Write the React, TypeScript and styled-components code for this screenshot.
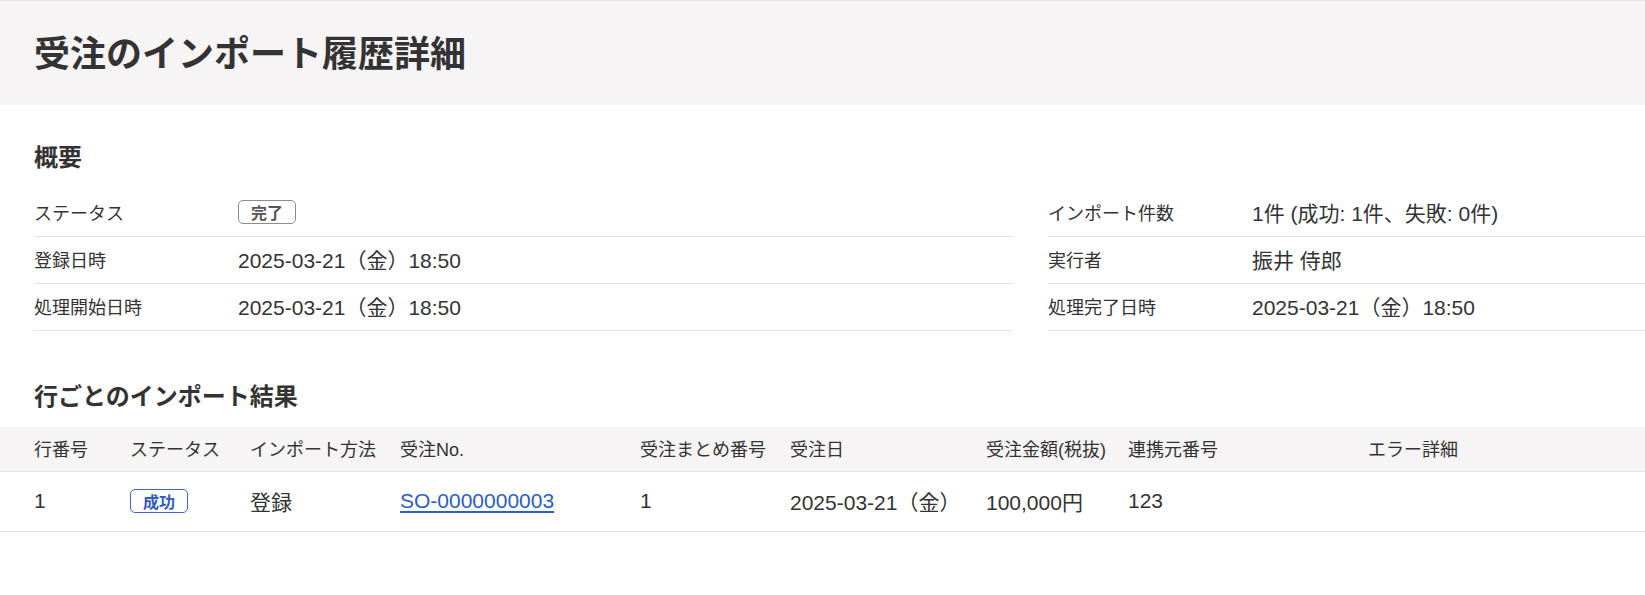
import {FC} from 'react'
import styled, {createGlobalStyle} from 'styled-components'

const GlobalStyle = createGlobalStyle`
  html, body {
    margin: 0;
    padding: 0;
    overflow: hidden;
    background: #fff;
  }
  body {
    font-family: "Liberation Sans", "Noto Sans CJK JP", sans-serif;
    color: #333;
  }
`

const Page = styled.div`
  min-width: 2060px;
  border-top: 1px solid #e6e6e6;
`

const TitleBar = styled.header`
  height: 104px;
  background: #f6f4f5;
  display: flex;
  align-items: center;
  padding: 0 0 4px 34px;
  box-sizing: border-box;
`

const Title = styled.h1`
  margin: 0;
  font-size: 36px;
  font-weight: 700;
  color: #333;
`

const Section = styled.section<{$top: number}>`
  padding-top: ${p => p.$top}px;
`

const Heading = styled.h2<{$gap: number}>`
  margin: 0 0 ${p => p.$gap}px;
  padding-left: 34px;
  font-size: 24px;
  line-height: 36px;
  font-weight: 700;
`

const Overview = styled.div`
  display: grid;
  grid-template-columns: 978px 978px;
  column-gap: 36px;
  padding-left: 34px;
`

const Column = styled.dl`
  margin: 0;
`

const Row = styled.div`
  display: flex;
  align-items: center;
  height: 46px;
  padding-bottom: 3px;
  box-sizing: content-box;
  height: 43px;
  border-bottom: 1px solid #e4e4e4;
`

const Label = styled.dt`
  width: 204px;
  flex-shrink: 0;
  font-size: 18px;
`

const Value = styled.dd`
  margin: 0;
  font-size: 21px;
`

const Badge = styled.span<{$tone: 'grey' | 'blue'}>`
  display: inline-flex;
  align-items: center;
  justify-content: center;
  box-sizing: border-box;
  width: 58px;
  height: 24px;
  border-radius: 5px;
  font-size: 16px;
  font-weight: 700;
  background: #fff;
  border: 1px solid ${p => (p.$tone === 'blue' ? '#3d68c8' : '#8c8c8c')};
  color: ${p => (p.$tone === 'blue' ? '#2f5bc2' : '#555')};
`

const cols = '96px 120px 150px 240px 150px 196px 142px 240px 1fr'

const TableHead = styled.div`
  display: grid;
  grid-template-columns: ${cols};
  align-items: center;
  height: 42px;
  padding: 0 0 2px 34px;
  background: #f6f4f5;
  border-bottom: 1px solid #e2e2e2;
  font-size: 18px;
`

const TableRow = styled.div`
  display: grid;
  grid-template-columns: ${cols};
  align-items: center;
  height: 57px;
  padding: 0 0 2px 34px;
  border-bottom: 1px solid #e4e4e4;
  font-size: 21px;
`

const Cell = styled.div`
  white-space: nowrap;
`

const Link = styled.a`
  color: #2c5cc5;
  text-decoration: underline;
  text-decoration-thickness: 2px;
  text-underline-offset: 3px;
`

const summaryLeft = [
  {label: 'ステータス', value: <Badge $tone="grey">完了</Badge>},
  {label: '登録日時', value: '2025-03-21（金）18:50'},
  {label: '処理開始日時', value: '2025-03-21（金）18:50'},
]

const summaryRight = [
  {label: 'インポート件数', value: '1件 (成功: 1件、失敗: 0件)'},
  {label: '実行者', value: '振井 侍郎'},
  {label: '処理完了日時', value: '2025-03-21（金）18:50'},
]

const headers = ['行番号', 'ステータス', 'インポート方法', '受注No.', '受注まとめ番号', '受注日', '受注金額(税抜)', '連携元番号', 'エラー詳細']

const App: FC = () => {
  return (
    <Page>
      <GlobalStyle/>
      <TitleBar>
        <Title>受注のインポート履歴詳細</Title>
      </TitleBar>

      <Section $top={35}>
        <Heading $gap={14}>概要</Heading>
        <Overview>
          <Column>
            {summaryLeft.map(r => (
              <Row key={r.label}>
                <Label>{r.label}</Label>
                <Value>{r.value}</Value>
              </Row>
            ))}
          </Column>
          <Column>
            {summaryRight.map(r => (
              <Row key={r.label}>
                <Label>{r.label}</Label>
                <Value>{r.value}</Value>
              </Row>
            ))}
          </Column>
        </Overview>
      </Section>

      <Section $top={48}>
        <Heading $gap={12}>行ごとのインポート結果</Heading>
        <TableHead>
          {headers.map(h => <Cell key={h}>{h}</Cell>)}
        </TableHead>
        <TableRow>
          <Cell>1</Cell>
          <Cell><Badge $tone="blue">成功</Badge></Cell>
          <Cell>登録</Cell>
          <Cell><Link href="#">SO-0000000003</Link></Cell>
          <Cell>1</Cell>
          <Cell>2025-03-21（金）</Cell>
          <Cell>100,000円</Cell>
          <Cell>123</Cell>
          <Cell></Cell>
        </TableRow>
      </Section>
    </Page>
  )
}

export default App
